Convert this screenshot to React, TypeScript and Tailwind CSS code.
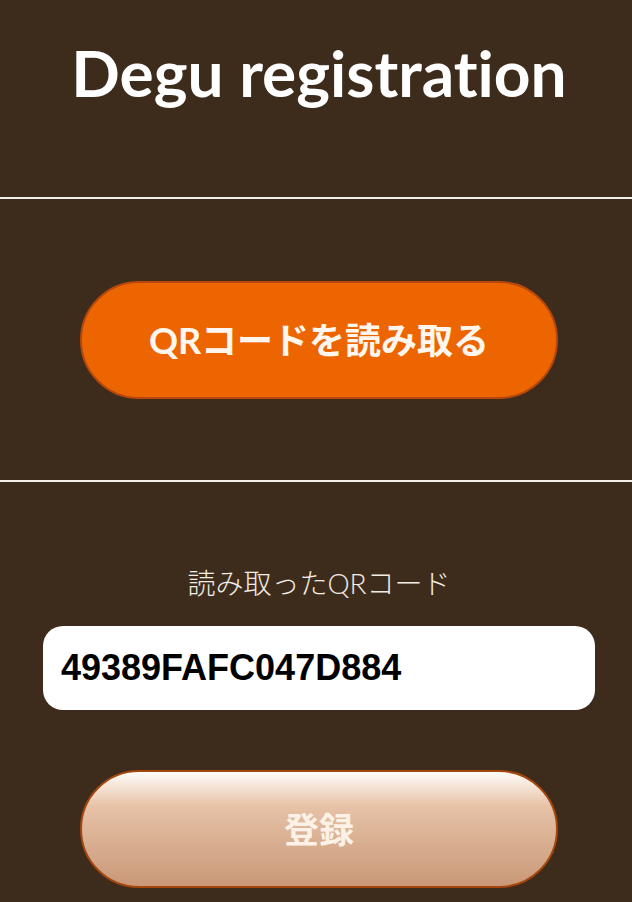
import React from "react";

const jp = { fontFamily: '"Lato", "Noto Sans CJK JP", sans-serif' };

export default function App() {
  return (
    <div className="min-h-[902px] w-full bg-[#3d2c1c] text-white" style={jp}>
      {/* header */}
      <div className="flex h-[197px] justify-center pl-[6px] pt-[33px]">
        <h1 className="text-[64px] font-bold leading-[80px] [font-variant-ligatures:none]">Degu registration</h1>
      </div>
      <div className="h-[2px] bg-[#f4f0ea]" />

      {/* scan */}
      <div className="flex h-[281px] items-center justify-center pl-[6px]">
        <button className="flex h-[118px] w-[478px] items-center justify-center rounded-full border-2 border-[#b8470b] bg-[#ec6500] text-[36px] font-bold text-[#fff7ef]">
          QRコードを読み取る
        </button>
      </div>
      <div className="h-[2px] bg-[#f4f0ea]" />

      {/* result */}
      <div className="flex flex-col items-center pl-[6px] pt-[85px]">
        <p className="text-[28px] font-light leading-[32px] text-[#f3ece4]">読み取ったQRコード</p>
        <div className="mt-[27px] flex h-[84px] w-[552px] items-center rounded-[20px] bg-white px-[18px]">
          <span className="text-[36px] font-bold text-black" style={{ fontFamily: '"Liberation Sans", Arial, sans-serif' }}>
            49389FAFC047D884
          </span>
        </div>
        <button className="mt-[60px] flex h-[118px] w-[478px] items-center justify-center rounded-full border-2 border-[#a4460d] bg-gradient-to-b from-[#fffdfb] via-[#e6c2a6] via-30% to-[#c99878] text-[35px] font-bold text-[#fbf1e6]">
          登録
        </button>
      </div>
    </div>
  );
}
